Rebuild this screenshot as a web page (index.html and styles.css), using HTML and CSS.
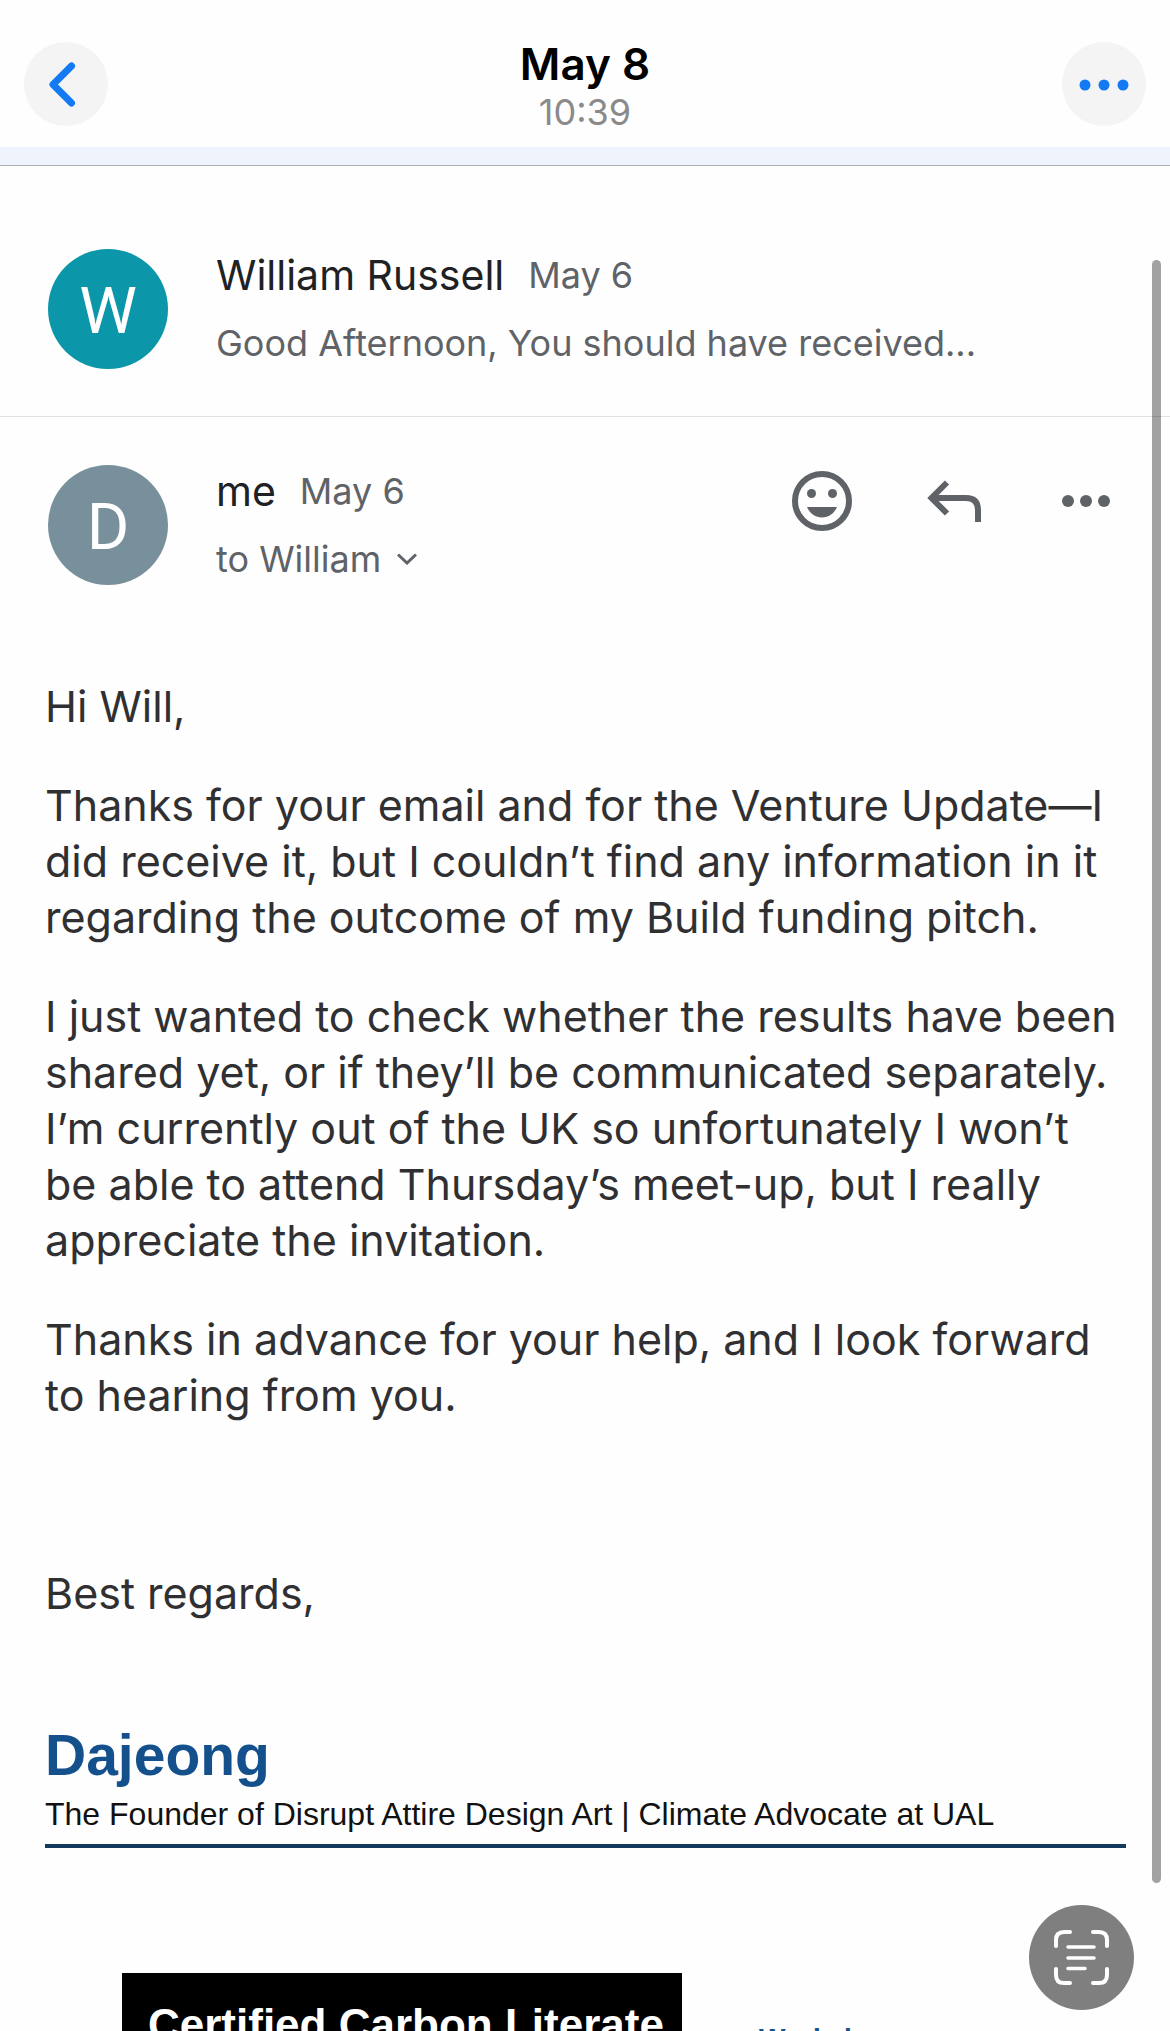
FILE: index.html
```html
<!DOCTYPE html>
<html lang="en">
<head>
  <meta charset="UTF-8">
  <meta name="viewport" content="width=device-width, initial-scale=1">
  <title>May 8</title>
  <link rel="stylesheet" href="styles.css">
</head>
<body>
  <header class="topbar">
    <button class="round-btn" aria-label="Back">
      <svg width="84" height="84" viewBox="0 0 84 84" fill="none" stroke="#147af3" stroke-width="7" stroke-linecap="round" stroke-linejoin="round">
        <path d="M47.500 24L29 42.500L47.500 61"/>
      </svg>
    </button>
    <div class="topbar-title">
      <h1>May 8</h1>
      <time>10:39</time>
    </div>
    <button class="round-btn" aria-label="More">
      <svg width="84" height="84" viewBox="0 0 84 84" fill="#147af3">
        <circle cx="23" cy="43" r="5.500"/>
        <circle cx="42" cy="43" r="5.500"/>
        <circle cx="61" cy="43" r="5.500"/>
      </svg>
    </button>
  </header>
  <div class="strip"></div>

  <main class="thread">
    <article class="message collapsed">
      <div class="avatar avatar-w">W</div>
      <div class="message-info">
        <div class="sender-row">
          <span class="sender">William Russell</span>
          <span class="date">May 6</span>
        </div>
        <p class="snippet">Good Afternoon, You should have received...</p>
      </div>
    </article>

    <article>
      <div class="message">
        <div class="avatar avatar-d">D</div>
        <div class="message-info">
          <div class="sender-row">
            <span class="sender">me</span>
            <span class="date">May 6</span>
          </div>
          <button class="recipient">
            to William
            <svg width="20" height="12" viewBox="0 0 20 12" fill="none" stroke="#5f6368" stroke-width="3"><path d="M1 1.500L10 10L19 1.500"/></svg>
          </button>
        </div>
        <div class="actions">
          <button aria-label="Add reaction">
            <svg width="60" height="60" viewBox="0 0 60 60" fill="#5f6368">
              <circle cx="30" cy="30" r="27" fill="none" stroke="#5f6368" stroke-width="6"/>
              <circle cx="19.500" cy="22.500" r="4.500"/>
              <circle cx="40.500" cy="22.500" r="4.500"/>
              <path d="M15 36H45C42.500 42 37 46.500 30 46.500S17.500 42 15 36Z"/>
            </svg>
          </button>
          <button aria-label="Reply">
            <svg width="60" height="60" viewBox="0 0 60 60" fill="none" stroke="#5f6368" stroke-width="6">
              <path d="M23 11.500L7.500 27L23 42.500M7.500 27H42Q54 27 54 39V51"/>
            </svg>
          </button>
          <button aria-label="More options">
            <svg width="60" height="60" viewBox="0 0 60 60" fill="#5f6368">
              <circle cx="12" cy="30" r="6"/>
              <circle cx="30" cy="30" r="6"/>
              <circle cx="48" cy="30" r="6"/>
            </svg>
          </button>
        </div>
      </div>

      <div class="body-text">
        <p>Hi Will,</p>
        <p>Thanks for your email and for the Venture Update—I<br>did receive it, but I couldn’t find any information in it<br>regarding the outcome of my Build funding pitch.</p>
        <p>I just wanted to check whether the results have been<br>shared yet, or if they’ll be communicated separately.<br>I’m currently out of the UK so unfortunately I won’t<br>be able to attend Thursday’s meet-up, but I really<br>appreciate the invitation.</p>
        <p>Thanks in advance for your help, and I look forward<br>to hearing from you.</p>
        <p class="closing">Best regards,</p>
      </div>

      <footer class="signature">
        <h2>Dajeong</h2>
        <p class="role">The Founder of Disrupt Attire Design Art | Climate Advocate at UAL</p>
        <div class="signature-cards">
          <div class="badge">Certified Carbon Literate</div>
          <a class="site" href="#">Workshop</a>
        </div>
      </footer>
    </article>
  </main>

  <div class="scroll-thumb"></div>
  <button class="scan-btn" aria-label="Scan text">
    <svg width="105" height="105" viewBox="0 0 105 105" fill="none" stroke="#fff" stroke-width="4" stroke-linecap="round">
      <path d="M27 41V35Q27 27 35 27H41M64 27H70Q78 27 78 35V41M78 64V70Q78 78 70 78H64M41 78H35Q27 78 27 70V64"/>
      <path d="M39 42H65M39 53H65M39 63.500H56" stroke-width="3.500"/>
    </svg>
  </button>
</body>
</html>
```
FILE: styles.css
```css
* {
  box-sizing: border-box;
}

body {
  margin: 0;
  position: relative;
  height: 100vh;
  overflow: hidden;
  background: #fefefe;
  font-family: Inter, "Liberation Sans", sans-serif;
  color: #202124;
}

h1, h2, p {
  margin: 0;
}

button {
  padding: 0;
  border: none;
  background: none;
  font: inherit;
  color: inherit;
  cursor: pointer;
}

svg {
  display: block;
}

.topbar {
  display: flex;
  justify-content: space-between;
  align-items: flex-start;
  height: 147px;
  padding: 42px 24px 0;
}

.round-btn {
  border-radius: 50%;
  background: #f4f4f4;
}

.topbar-title {
  text-align: center;
}

.topbar-title h1 {
  font-size: 44px;
  line-height: 44px;
  font-weight: 600;
  color: #000;
}

.topbar-title time {
  display: block;
  font-size: 36px;
  line-height: 52px;
  color: #8a8a8a;
}

.strip {
  height: 19px;
  background: #eff3fb;
  border-bottom: 1px solid #b0b0b4;
}

.message {
  display: flex;
  align-items: flex-start;
  padding: 48px 48px 0;
}

.message.collapsed {
  height: 251px;
  padding-top: 83px;
  border-bottom: 1px solid #dfe1e3;
}

.avatar {
  flex: none;
  width: 120px;
  height: 120px;
  margin-right: 48px;
  border-radius: 50%;
  font-family: Roboto, sans-serif;
  font-size: 65px;
  line-height: 124px;
  text-align: center;
  color: #fff;
}

.avatar-w {
  background: #0b97a9;
}

.avatar-d {
  background: #78909c;
}

.message-info {
  flex: 1;
  color: #5f6368;
}

.sender-row {
  display: flex;
  align-items: center;
  gap: 24px;
  line-height: 52px;
}

.sender {
  font-size: 41px;
  color: #202124;
}

.date,
.snippet,
.recipient {
  font-size: 36px;
}

.snippet,
.recipient {
  margin-top: 16px;
  line-height: 52px;
}

.recipient {
  display: flex;
  align-items: center;
  gap: 16px;
}

.actions {
  display: flex;
  gap: 72px;
  padding: 6px 6px 0 0;
}

.body-text {
  padding: 93px 32px 0 45px;
  font-size: 43px;
  line-height: 56px;
  color: #303033;
}

.body-text p {
  margin-bottom: 43px;
}

.body-text .closing {
  margin: 142px 0 0;
}

.signature {
  padding: 102px 44px 0 45px;
  font-family: "Liberation Sans", Arial, sans-serif;
}

.signature h2 {
  font-size: 57px;
  line-height: 64px;
  color: #14508c;
}

.role {
  margin-top: 7px;
  padding-bottom: 10px;
  border-bottom: 4px solid #123a5c;
  font-size: 32px;
  line-height: 40px;
  color: #111;
}

.signature-cards {
  display: flex;
  gap: 77px;
  padding: 125px 0 0 77px;
}

.badge {
  width: 560px;
  padding: 28px 0 0 26px;
  background: #000;
  font-size: 44px;
  font-weight: bold;
  line-height: 48px;
  color: #fff;
}

.site {
  padding-top: 49px;
  font-size: 28px;
  font-weight: bold;
  line-height: 34px;
  text-decoration: none;
  color: #14508c;
}

/* floating over the thread */
.scroll-thumb {
  position: absolute;
  top: 260px;
  right: 9px;
  bottom: 148px;
  width: 9px;
  border-radius: 5px;
  background: rgba(0, 0, 0, 0.36);
}

.scan-btn {
  position: absolute;
  right: 36px;
  bottom: 21px;
  border-radius: 50%;
  background: #7f7f7f;
}
```
